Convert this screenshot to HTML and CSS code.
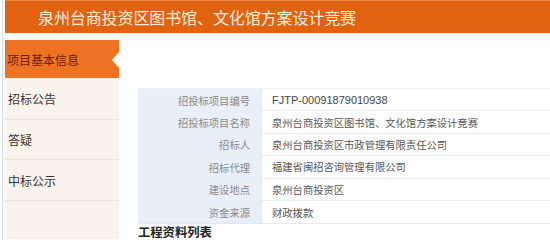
FILE: index.html
```html
<!DOCTYPE html>
<html lang="zh-CN">
<head>
<meta charset="utf-8">
<title>泉州台商投资区图书馆、文化馆方案设计竞赛</title>
<link rel="stylesheet" href="styles.css">
</head>
<body>
<div class="page">
  <header class="banner">
    <h1 class="banner-title">泉州台商投资区图书馆、文化馆方案设计竞赛</h1>
  </header>
  <div class="main">
    <nav class="side">
      <a class="side-item active">项目基本信息<span class="notch"></span></a>
      <a class="side-item">招标公告</a>
      <a class="side-item">答疑</a>
      <a class="side-item">中标公示</a>
      <div class="side-rest"></div>
    </nav>
    <section class="content">
      <div class="info">
        <div class="lab">招投标项目编号</div><div class="val"><span class="code">FJTP-00091879010938</span></div>
        <div class="lab">招投标项目名称</div><div class="val">泉州台商投资区图书馆、文化馆方案设计竞赛</div>
        <div class="lab">招标人</div><div class="val">泉州台商投资区市政管理有限责任公司</div>
        <div class="lab">招标代理</div><div class="val">福建省闽招咨询管理有限公司</div>
        <div class="lab">建设地点</div><div class="val">泉州台商投资区</div>
        <div class="lab">资金来源</div><div class="val">财政拨款</div>
      </div>
      <h2 class="list-title">工程资料列表</h2>
    </section>
  </div>
</div>
</body>
</html>
```

FILE: styles.css
```css
html, body {
  margin: 0;
  padding: 0;
  background: #ffffff;
  width: 550px;
  height: 240px;
  overflow: hidden;
  font-family: "Noto Sans CJK SC", "Liberation Sans", sans-serif;
}
.page {
  position: relative;
  padding-left: 5px;
  height: 240px;
  box-sizing: border-box;
  background: linear-gradient(to right, #ffffff 0 2px, #d6dee8 2px 3px, #fbfbfb 3px 5px, transparent 5px);
}
.banner {
  height: 33px;
  background: #e1620f;
  border-top: 1px solid #eb8a4e;
  box-sizing: border-box;
  display: flex;
  align-items: center;
  padding-left: 33px;
}
.banner-title {
  margin: 0;
  font-size: 16px;
  font-weight: normal;
  color: #fdf1e6;
  line-height: 1;
  letter-spacing: -0.1px;
  margin-top: -1px;
}
.main {
  display: flex;
  margin-top: 7px;
}
.side {
  width: 114px;
  flex: none;
  display: flex;
  flex-direction: column;
  background: #fcf4ec;
}
.side-item {
  position: relative;
  display: flex;
  align-items: center;
  height: 41px;
  padding-left: 3px;
  font-size: 12px;
  color: #333;
  border-bottom: 1px solid #ebe3dc;
  box-sizing: border-box;
}
.side-item.active {
  height: 38px;
  background: #ee7322;
  color: #6e1a0a;
  border-bottom: none;
  padding-top: 1px;
  padding-left: 2px;
}
.side-item:nth-child(2) { height: 42px; }
.side-item:nth-child(3) { height: 40px; }
.notch {
  position: absolute;
  right: 0;
  top: 12px;
  width: 0;
  height: 0;
  border-top: 8px solid transparent;
  border-bottom: 8px solid transparent;
  border-right: 7px solid #ffffff;
}
.side-rest {
  flex: 1;
  height: 40px;
}
.content {
  flex: 1;
  padding-left: 19px;
  padding-top: 48px;
  min-width: 0;
}
.info {
  display: grid;
  grid-template-columns: 124px 1fr;
  grid-auto-rows: 22.4px;
  border-top: 1px solid #eef0f3;
  border-bottom: 1px solid #e6e8ec;
  width: 420px;
}
.lab {
  background: #e9eff8;
  color: #8a8a8a;
  font-size: 10.3px;
  text-align: right;
  padding-right: 11px;
  display: flex;
  align-items: center;
  justify-content: flex-end;
  border-right: 1px solid #e3e8ef;
}
.val {
  color: #555;
  font-size: 10.3px;
  display: flex;
  align-items: center;
  padding-left: 10px;
  border-bottom: 1px solid #ececec;
  white-space: nowrap;
}
.val:last-child { border-bottom: none; }
.code {
  font-family: "Liberation Sans", sans-serif;
  font-size: 11px;
  color: #444;
}
.list-title {
  margin: 1px 0 0;
  font-size: 12.3px;
  font-weight: bold;
  color: #222;
  line-height: 14px;
}
```
